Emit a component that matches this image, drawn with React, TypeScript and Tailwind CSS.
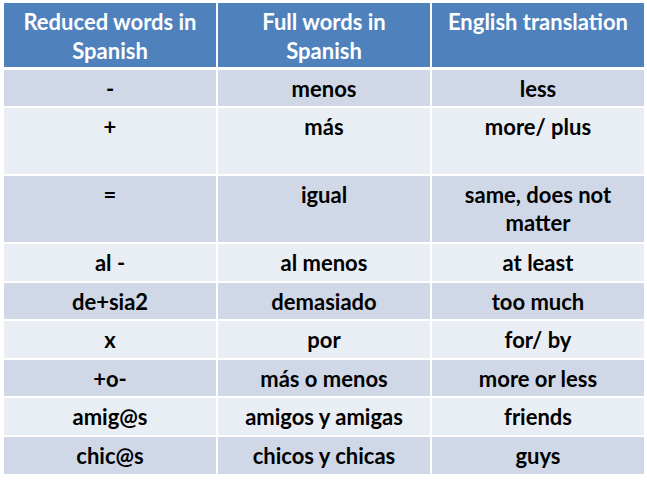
import React from 'react'

type Row = { short: string; full: string; english: string; h: string }

const rows: Row[] = [
  { short: '-', full: 'menos', english: 'less', h: 'h-[36px]' },
  { short: '+', full: 'más', english: 'more/ plus', h: 'h-[66px]' },
  { short: '=', full: 'igual', english: 'same, does not matter', h: 'h-[66px]' },
  { short: 'al -', full: 'al menos', english: 'at least', h: 'h-[37px]' },
  { short: 'de+sia2', full: 'demasiado', english: 'too much', h: 'h-[36px]' },
  { short: 'x', full: 'por', english: 'for/ by', h: 'h-[37px]' },
  { short: '+o-', full: 'más o menos', english: 'more or less', h: 'h-[36px]' },
  { short: 'amig@s', full: 'amigos y amigas', english: 'friends', h: 'h-[37px]' },
  { short: 'chic@s', full: 'chicos y chicas', english: 'guys', h: 'h-[37px]' },
]

const Cell = ({ children, bg }: { children: React.ReactNode; bg: string }) => (
  <div className={`${bg} px-2 pt-[5px] text-center`}>{children}</div>
)

const App = () => {
  return (
    <div className="w-[647px] h-[480px] bg-white pt-[3px] pl-[4px] font-['Lato','Liberation_Sans',sans-serif] text-[22px] font-bold leading-[28px]">
      <div className="flex flex-col gap-[2px] w-[640px]">
        <div className="grid grid-cols-[212px_212px_212px] gap-[2px] h-[64px] mb-[1px] text-white">
          <div className="bg-[#4f81bd] px-2 pt-[4px] leading-[29px] text-center">Reduced words in Spanish</div>
          <div className="bg-[#4f81bd] px-8 pt-[4px] leading-[29px] text-center">Full words in Spanish</div>
          <div className="bg-[#4f81bd] px-2 pt-[4px] leading-[29px] text-center">English translation</div>
        </div>
        {rows.map((row, i) => {
          const bg = i % 2 === 0 ? 'bg-[#d0d8e8]' : 'bg-[#e9edf4]'
          return (
            <div key={row.short} className={`grid grid-cols-[212px_212px_212px] gap-[2px] ${row.h} text-black`}>
              <Cell bg={bg}>{row.short}</Cell>
              <Cell bg={bg}>{row.full}</Cell>
              <Cell bg={bg}>
                <span className="block px-3">{row.english}</span>
              </Cell>
            </div>
          )
        })}
      </div>
    </div>
  )
}

export default App
